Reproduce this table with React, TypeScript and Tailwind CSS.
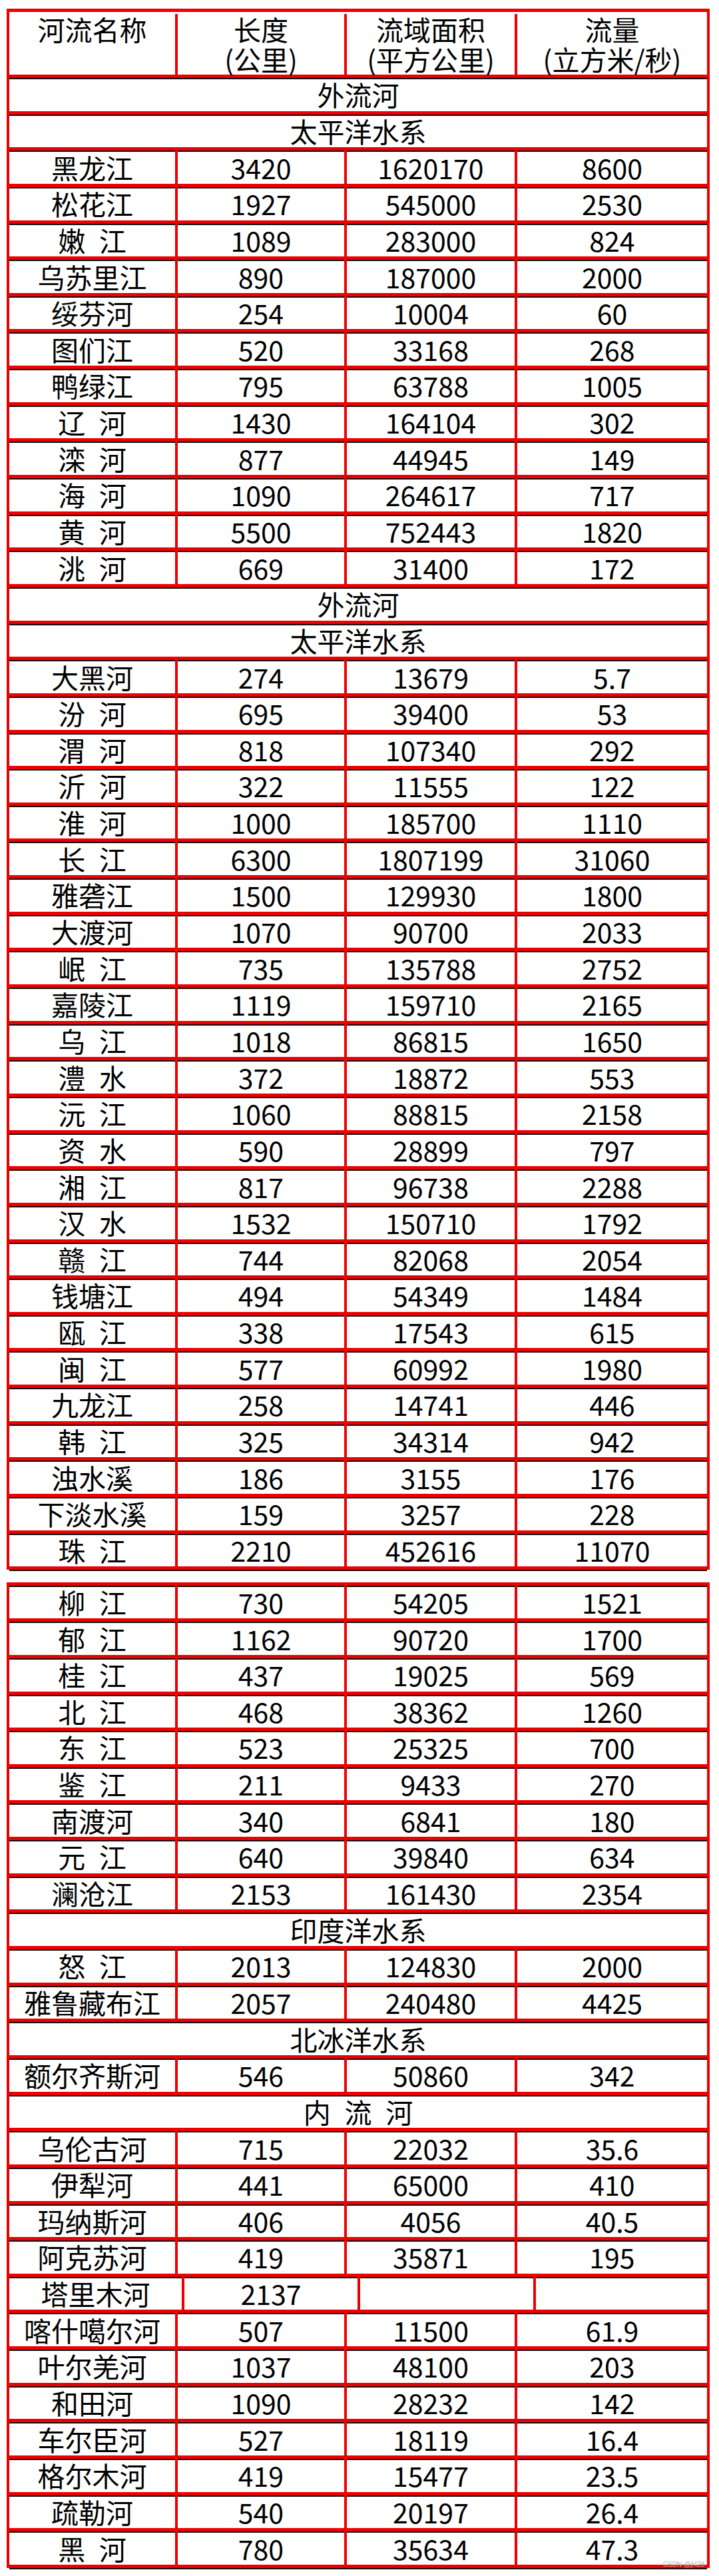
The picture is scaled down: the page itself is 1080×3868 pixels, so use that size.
import React from "react";

type Entry =
  | { t: "sec"; text: string }
  | { t: "row"; c: [string, string, string, string] }
  | { t: "eq"; c: [string, string, string, string] };

const sec = (text: string): Entry => ({ t: "sec", text });
const row = (a: string, b: string, c: string, d: string): Entry => ({ t: "row", c: [a, b, c, d] });

const part1: Entry[] = [
  sec("外流河"),
  sec("太平洋水系"),
  row("黑龙江", "3420", "1620170", "8600"),
  row("松花江", "1927", "545000", "2530"),
  row("嫩 江", "1089", "283000", "824"),
  row("乌苏里江", "890", "187000", "2000"),
  row("绥芬河", "254", "10004", "60"),
  row("图们江", "520", "33168", "268"),
  row("鸭绿江", "795", "63788", "1005"),
  row("辽 河", "1430", "164104", "302"),
  row("滦 河", "877", "44945", "149"),
  row("海 河", "1090", "264617", "717"),
  row("黄 河", "5500", "752443", "1820"),
  row("洮 河", "669", "31400", "172"),
  sec("外流河"),
  sec("太平洋水系"),
  row("大黑河", "274", "13679", "5.7"),
  row("汾 河", "695", "39400", "53"),
  row("渭 河", "818", "107340", "292"),
  row("沂 河", "322", "11555", "122"),
  row("淮 河", "1000", "185700", "1110"),
  row("长 江", "6300", "1807199", "31060"),
  row("雅砻江", "1500", "129930", "1800"),
  row("大渡河", "1070", "90700", "2033"),
  row("岷 江", "735", "135788", "2752"),
  row("嘉陵江", "1119", "159710", "2165"),
  row("乌 江", "1018", "86815", "1650"),
  row("澧 水", "372", "18872", "553"),
  row("沅 江", "1060", "88815", "2158"),
  row("资 水", "590", "28899", "797"),
  row("湘 江", "817", "96738", "2288"),
  row("汉 水", "1532", "150710", "1792"),
  row("赣 江", "744", "82068", "2054"),
  row("钱塘江", "494", "54349", "1484"),
  row("瓯 江", "338", "17543", "615"),
  row("闽 江", "577", "60992", "1980"),
  row("九龙江", "258", "14741", "446"),
  row("韩 江", "325", "34314", "942"),
  row("浊水溪", "186", "3155", "176"),
  row("下淡水溪", "159", "3257", "228"),
  row("珠 江", "2210", "452616", "11070"),
];

const part2: Entry[] = [
  row("柳 江", "730", "54205", "1521"),
  row("郁 江", "1162", "90720", "1700"),
  row("桂 江", "437", "19025", "569"),
  row("北 江", "468", "38362", "1260"),
  row("东 江", "523", "25325", "700"),
  row("鉴 江", "211", "9433", "270"),
  row("南渡河", "340", "6841", "180"),
  row("元 江", "640", "39840", "634"),
  row("澜沧江", "2153", "161430", "2354"),
  sec("印度洋水系"),
  row("怒 江", "2013", "124830", "2000"),
  row("雅鲁藏布江", "2057", "240480", "4425"),
  sec("北冰洋水系"),
  row("额尔齐斯河", "546", "50860", "342"),
  sec("内 流 河"),
  row("乌伦古河", "715", "22032", "35.6"),
  row("伊犁河", "441", "65000", "410"),
  row("玛纳斯河", "406", "4056", "40.5"),
  row("阿克苏河", "419", "35871", "195"),
  { t: "eq", c: ["塔里木河", "2137", "", ""] },
  row("喀什噶尔河", "507", "11500", "61.9"),
  row("叶尔羌河", "1037", "48100", "203"),
  row("和田河", "1090", "28232", "142"),
  row("车尔臣河", "527", "18119", "16.4"),
  row("格尔木河", "419", "15477", "23.5"),
  row("疏勒河", "540", "20197", "26.4"),
  row("黑 河", "780", "35634", "47.3"),
];

const rowCls =
  "flex h-[54.65px] border-b-[5px] border-[#ee0000] shadow-[0_2px_0_#111]";

function Line({ e }: { e: Entry }) {
  if (e.t === "sec") {
    return (
      <div className={rowCls}>
        <div className="flex flex-1 items-center justify-center">{e.text}</div>
      </div>
    );
  }
  if (e.t === "eq") {
    return (
      <div className={rowCls}>
        <div className="flex w-[263px] items-center justify-center border-r-4 border-[#ee0000]">{e.c[0]}</div>
        <div className="flex w-[264px] items-center justify-center border-r-4 border-[#ee0000]">{e.c[1]}</div>
        <div className="flex w-[264px] items-center justify-center border-r-4 border-[#ee0000]">{e.c[2]}</div>
        <div className="flex flex-1 items-center justify-center">{e.c[3]}</div>
      </div>
    );
  }
  return (
    <div className={rowCls}>
      <div className="flex w-[253px] items-center justify-center border-r-4 border-[#ee0000]">{e.c[0]}</div>
      <div className="flex w-[254px] items-center justify-center border-r-4 border-[#ee0000]">{e.c[1]}</div>
      <div className="flex w-[256px] items-center justify-center border-r-4 border-[#ee0000]">{e.c[2]}</div>
      <div className="flex flex-1 items-center justify-center">{e.c[3]}</div>
    </div>
  );
}

export default function App() {
  return (
    <div className="relative h-[3868px] w-[1080px] overflow-hidden bg-white pt-[13px] font-['Noto_Sans_CJK_SC',sans-serif] text-[41px] leading-none text-black [word-spacing:0.28em]">
      <div className="ml-[10px] w-[1056px] border-x-4 border-t-[5px] border-[#ee0000]">
        <div className="flex h-[99px] border-b-[5px] border-[#ee0000] pt-[3px] text-center leading-[45px] whitespace-pre-line shadow-[0_2px_0_#111]">
          <div className="w-[253px] border-r-4 border-[#ee0000]">河流名称</div>
          <div className="w-[254px] border-r-4 border-[#ee0000]">{"长度\n(公里)"}</div>
          <div className="w-[256px] border-r-4 border-[#ee0000]">{"流域面积\n(平方公里)"}</div>
          <div className="flex-1">{"流量\n(立方米/秒)"}</div>
        </div>
        {part1.map((e, i) => (
          <Line key={i} e={e} />
        ))}
      </div>
      <div className="ml-[10px] mt-[18.35px] w-[1056px] border-x-4 border-t-[5px] border-[#ee0000] shadow-[inset_0_2px_0_#111]">
        {part2.map((e, i) => (
          <Line key={i} e={e} />
        ))}
      </div>
      <div className="absolute left-[996px] top-[3846px] font-['Liberation_Sans',sans-serif] text-[10px] leading-none text-[#b8b8b8] [word-spacing:0]">
        CSDN @jl428
      </div>
    </div>
  );
}
